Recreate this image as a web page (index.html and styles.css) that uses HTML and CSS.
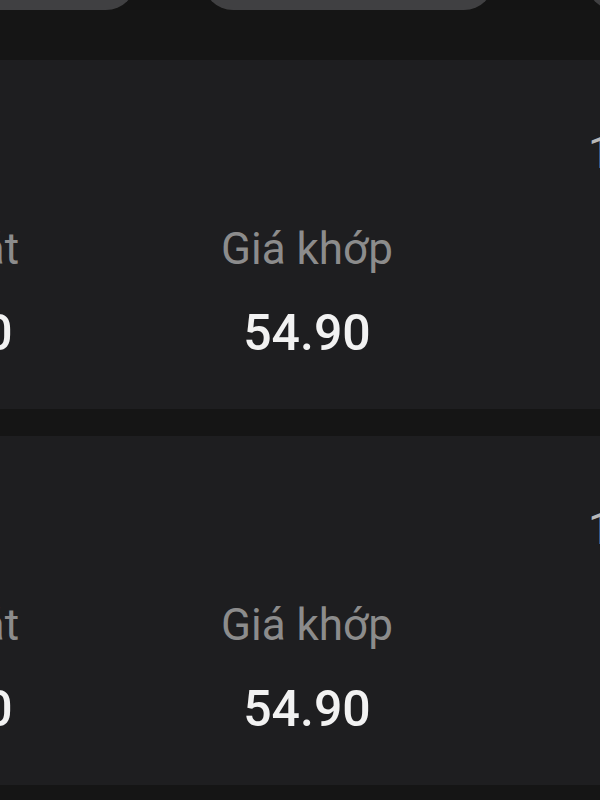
FILE: index.html
```html
<!DOCTYPE html>
<html lang="vi">
<head>
    <meta charset="UTF-8">
    <meta name="viewport" content="width=device-width, initial-scale=1.0">
    <title>Lệnh khớp</title>
    <link rel="stylesheet" href="styles.css">
</head>
<body>

    <!-- Tab bar (only the bottom edge is visible) -->
    <div class="tab-bar">
        <div class="tab tab-first"></div>
        <div class="tab tab-middle"></div>
        <div class="tab tab-last"></div>
    </div>

    <!-- Order list -->
    <div class="order-list">
        <div class="order-card">
            <div class="order-head">
                <span class="order-time">14:25:03</span>
            </div>
            <div class="order-row">
                <div class="order-cell">
                    <div class="cell-label">Giá đặt</div>
                    <div class="cell-value">54.90</div>
                </div>
                <div class="order-cell">
                    <div class="cell-label">Giá khớp</div>
                    <div class="cell-value">54.90</div>
                </div>
                <div class="order-cell">
                    <div class="cell-label">KL khớp</div>
                    <div class="cell-value">100</div>
                </div>
            </div>
        </div>

        <div class="order-card">
            <div class="order-head">
                <span class="order-time">14:22:41</span>
            </div>
            <div class="order-row">
                <div class="order-cell">
                    <div class="cell-label">Giá đặt</div>
                    <div class="cell-value">54.90</div>
                </div>
                <div class="order-cell">
                    <div class="cell-label">Giá khớp</div>
                    <div class="cell-value">54.90</div>
                </div>
                <div class="order-cell">
                    <div class="cell-label">KL khớp</div>
                    <div class="cell-value">200</div>
                </div>
            </div>
        </div>
    </div>

</body>
</html>
```

FILE: styles.css
```css
/* Basic Styling */
html, body {
    margin: 0;
    padding: 0;
    height: 800px;
    overflow: hidden;
}

body {
    font-family: Roboto, "Noto Sans", Arial, sans-serif;
    background-color: #151515;
    color: #f0f0f0;
}

/* Tabs */
.tab-bar {
    display: flex;
    height: 10px;
    overflow: hidden;
    background-color: #141414;
}

.tab {
    flex: none;
    height: 50px;
    margin-top: -40px;
    background-color: #404042;
    border-radius: 0 0 30px 30px;
}

.tab-first {
    width: 200px;
    margin-left: -64px;
}

.tab-middle {
    width: 291px;
    margin-left: 67px;
}

.tab-last {
    width: 200px;
    margin-left: 92px;
}

/* Orders */
.order-list {
    display: flex;
    flex-direction: column;
    gap: 27px;
    padding-top: 50px;
}

.order-card {
    background-color: #1e1e20;
    height: 349px;
    padding-top: 67px;
    box-sizing: border-box;
}

.order-head {
    display: flex;
    padding-left: 588px;
    height: 52px;
    white-space: nowrap;
    overflow: hidden;
}

.order-time {
    font-size: 44px;
    line-height: 52px;
    color: #b8b8b8;
}

.order-row {
    display: grid;
    grid-template-columns: 358px 358px 440px;
    margin-left: -230px;
    margin-top: 44px;
}

.order-cell {
    text-align: center;
    white-space: nowrap;
}

.cell-label {
    font-size: 44px;
    line-height: 52px;
    color: #8c8c8c;
}

.cell-value {
    font-size: 50px;
    line-height: 58px;
    font-weight: 500;
    color: #f2f2f2;
    margin-top: 29px;
}
```
